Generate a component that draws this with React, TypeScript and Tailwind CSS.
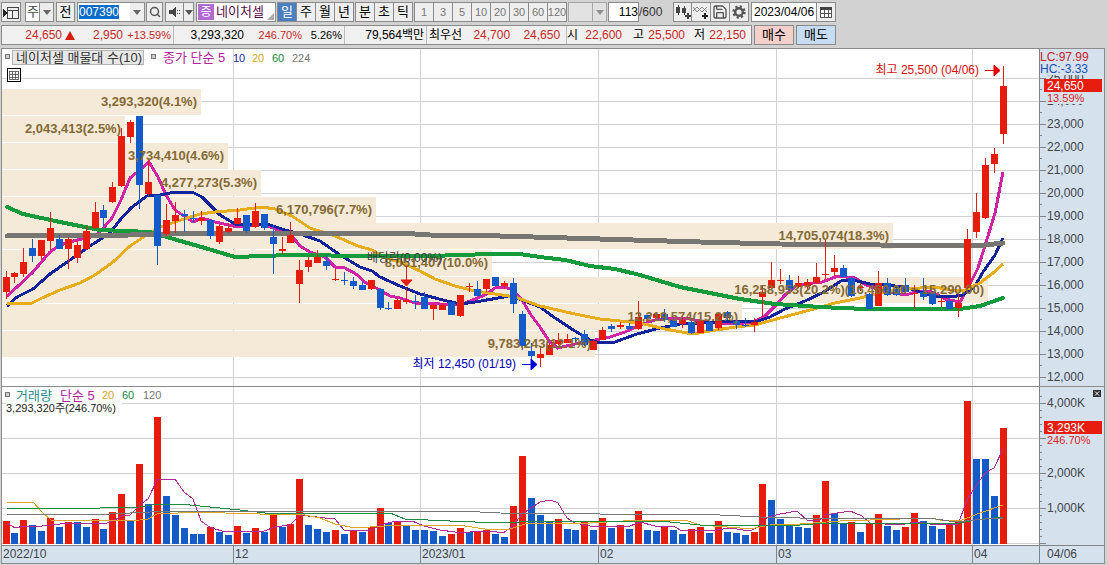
import { useEffect, useRef, useState } from 'react';
import type { ReactNode } from 'react';
import { Save, Search } from 'lucide-react';
import { clsx } from 'clsx';

type Point = [number, number];
// direction, high, body top, body bottom, low
type Candle = ['R' | 'B', number, number, number, number];
type Volume = ['R' | 'B', number];

const UP = '#e61c0c';
const DOWN = '#145ac8';

const CANDLES: Candle[] = [
  ['R', 271, 277, 292, 299], ['R', 272, 273, 277, 283], ['R', 248, 262, 274, 277], ['B', 239, 248, 256, 262],
  ['R', 240, 240, 256, 260], ['R', 212, 228, 241, 250], ['B', 235, 239, 249, 249], ['R', 237, 239, 249, 269],
  ['R', 240, 245, 258, 263], ['R', 226, 231, 249, 250], ['R', 202, 212, 228, 229], ['B', 205, 210, 218, 227],
  ['R', 182, 187, 202, 203], ['R', 128, 136, 186, 187], ['R', 120, 122, 137, 143], ['B', 116, 116, 185, 209],
  ['R', 160, 182, 194, 196], ['B', 195, 195, 246, 265], ['R', 204, 220, 234, 236], ['R', 202, 215, 221, 233],
  ['B', 210, 214, 216, 232], ['B', 211, 218, 219, 223], ['R', 211, 218, 221, 225], ['B', 219, 220, 236, 239],
  ['R', 225, 226, 242, 244], ['R', 223, 228, 232, 233], ['R', 208, 218, 224, 224], ['B', 215, 215, 231, 233],
  ['R', 203, 211, 227, 228], ['B', 214, 214, 228, 230], ['B', 225, 237, 244, 274], ['R', 237, 249, 251, 254],
  ['R', 222, 235, 243, 243], ['R', 260, 270, 284, 303], ['R', 257, 260, 267, 272], ['R', 250, 257, 263, 263],
  ['B', 255, 261, 266, 270], ['R', 269, 279, 280, 281], ['B', 272, 280, 281, 285], ['B', 277, 281, 286, 289],
  ['B', 281, 285, 290, 290], ['R', 280, 280, 289, 290], ['B', 288, 289, 308, 310], ['B', 302, 308, 309, 310],
  ['R', 298, 300, 309, 309], ['R', 288, 300, 302, 304], ['B', 295, 301, 302, 309], ['B', 292, 297, 309, 309],
  ['R', 304, 305, 309, 320], ['R', 303, 305, 310, 310], ['B', 302, 302, 315, 315], ['R', 295, 295, 316, 317],
  ['R', 283, 286, 287, 292], ['B', 281, 289, 296, 296], ['R', 279, 279, 289, 292], ['B', 277, 277, 286, 286],
  ['R', 281, 283, 286, 289], ['B', 278, 283, 304, 313], ['B', 311, 314, 346, 350], ['B', 343, 351, 356, 361],
  ['R', 346, 354, 358, 367], ['R', 343, 345, 355, 355], ['R', 333, 340, 344, 345], ['R', 334, 339, 343, 343],
  ['B', 337, 338, 339, 342], ['B', 330, 334, 345, 346], ['R', 340, 341, 350, 350], ['R', 327, 330, 340, 340],
  ['B', 324, 326, 329, 332], ['R', 322, 325, 327, 329], ['B', 323, 326, 329, 330], ['R', 301, 317, 329, 330],
  ['B', 315, 315, 319, 320], ['R', 312, 314, 318, 319], ['B', 309, 314, 320, 322], ['B', 319, 320, 327, 327],
  ['R', 318, 320, 324, 328], ['B', 321, 322, 333, 334], ['R', 319, 320, 333, 333], ['B', 321, 322, 331, 331],
  ['R', 312, 314, 328, 330], ['B', 311, 312, 318, 320], ['B', 320, 321, 325, 329], ['B', 318, 325, 326, 327],
  ['R', 318, 322, 325, 332], ['R', 286, 292, 297, 317], ['R', 262, 280, 288, 288], ['R', 269, 280, 281, 284],
  ['B', 275, 280, 290, 291], ['R', 276, 283, 287, 288], ['R', 279, 282, 286, 289], ['R', 263, 277, 283, 284],
  ['R', 240, 274, 275, 280], ['R', 255, 268, 272, 276], ['B', 265, 268, 277, 277], ['B', 277, 278, 296, 297],
  ['R', 283, 287, 288, 291], ['B', 293, 294, 309, 309], ['R', 271, 283, 306, 306], ['B', 278, 283, 295, 296],
  ['B', 285, 289, 295, 296], ['B', 278, 285, 292, 293], ['R', 285, 293, 294, 309], ['B', 278, 292, 297, 300],
  ['B', 291, 293, 304, 305], ['R', 298, 301, 302, 307], ['B', 299, 301, 309, 309], ['R', 294, 303, 308, 317],
  ['R', 229, 239, 288, 289], ['R', 193, 212, 232, 238], ['R', 158, 165, 218, 219], ['R', 148, 154, 164, 173],
  ['R', 66, 86, 134, 144],
];

const VOLUMES: Volume[] = [
  ['R', 521], ['B', 533], ['R', 520], ['B', 525], ['B', 531], ['R', 518], ['B', 527], ['R', 522], ['B', 522], ['B', 527],
  ['R', 519], ['B', 529], ['R', 512], ['R', 494], ['B', 521], ['R', 464], ['B', 504], ['R', 417], ['B', 496], ['B', 515],
  ['B', 528], ['B', 534], ['B', 534], ['R', 527], ['B', 532], ['B', 535], ['R', 526], ['B', 533], ['R', 528], ['B', 532],
  ['R', 515], ['B', 527], ['R', 524], ['R', 479], ['B', 525], ['B', 529], ['B', 532], ['R', 530], ['B', 534], ['R', 530],
  ['B', 532], ['R', 527], ['R', 508], ['B', 523], ['R', 522], ['B', 525], ['B', 530], ['B', 530], ['B', 531], ['B', 536],
  ['R', 534], ['R', 528], ['B', 532], ['R', 532], ['R', 530], ['B', 534], ['B', 537], ['R', 506], ['R', 456], ['B', 498],
  ['B', 515], ['B', 522], ['R', 519], ['B', 529], ['B', 530], ['R', 522], ['B', 530], ['R', 518], ['B', 528], ['R', 525],
  ['B', 529], ['R', 511], ['B', 530], ['B', 531], ['R', 527], ['B', 530], ['B', 534], ['R', 529], ['R', 527], ['B', 533],
  ['R', 521], ['B', 532], ['B', 533], ['B', 535], ['R', 532], ['R', 484], ['B', 500], ['B', 519], ['B', 525], ['B', 527],
  ['B', 528], ['R', 515], ['R', 481], ['B', 513], ['B', 523], ['R', 522], ['B', 532], ['R', 524], ['R', 514], ['B', 526],
  ['B', 530], ['R', 527], ['R', 513], ['B', 521], ['B', 526], ['B', 529], ['R', 525], ['R', 522], ['R', 401], ['B', 459],
  ['B', 459], ['B', 496], ['R', 428],
];

const PRICE_LINES: { color: string; width: number; points: Point[] }[] = [
  {
    color: '#d023a8',
    width: 3,
    points: [
      [7, 296], [17, 287], [32, 273], [50, 252], [60, 245], [77, 240], [96, 236], [105, 226], [112, 218], [121, 200],
      [130, 178], [140, 170], [149, 162], [158, 177], [166, 195], [175, 210], [184, 216], [193, 222], [202, 218],
      [215, 222], [233, 226], [247, 226], [260, 224], [273, 228], [292, 236], [300, 246], [310, 252], [325, 257],
      [335, 267], [345, 268], [356, 274], [366, 283], [378, 289], [390, 296], [400, 298], [415, 303], [432, 303],
      [447, 305], [463, 304], [475, 299], [485, 295], [495, 288], [505, 287], [513, 290], [522, 300], [531, 315],
      [540, 327], [549, 341], [558, 348], [575, 344], [595, 340], [610, 337], [625, 332], [640, 325], [655, 320],
      [670, 318], [685, 318], [700, 321], [715, 323], [735, 324], [753, 322], [765, 316], [775, 306], [785, 295],
      [797, 285], [805, 284], [822, 282], [838, 276], [855, 278], [866, 285], [880, 290], [905, 295], [920, 291],
      [930, 291], [945, 299], [960, 302], [968, 288], [978, 268], [988, 236], [995, 213], [1003, 172],
    ],
  },
  {
    color: '#14259b',
    width: 3,
    points: [
      [7, 306], [17, 297], [33, 289], [50, 274], [70, 260], [90, 246], [110, 233], [120, 220], [131, 208], [147, 196],
      [160, 195], [175, 192], [192, 192], [202, 197], [220, 215], [235, 224], [250, 224], [270, 225], [285, 230],
      [300, 234], [320, 241], [340, 255], [360, 267], [372, 271], [380, 277], [400, 286], [420, 294], [447, 301],
      [460, 304], [475, 302], [510, 296], [522, 300], [540, 307], [555, 318], [575, 331], [590, 340], [600, 343],
      [615, 342], [637, 334], [660, 328], [680, 324], [700, 323], [740, 321], [755, 322], [770, 317], [785, 309],
      [805, 301], [822, 293], [833, 286], [841, 281], [853, 280], [870, 284], [885, 285], [905, 287], [920, 292],
      [935, 296], [950, 297], [963, 295], [975, 286], [983, 272], [995, 255], [1003, 238],
    ],
  },
  {
    color: '#e6ac19',
    width: 3,
    points: [
      [7, 303], [32, 303], [42, 298], [60, 290], [80, 283], [95, 275], [113, 262], [130, 246], [145, 236], [160, 227],
      [175, 222], [200, 214], [215, 212], [240, 210], [262, 207], [275, 209], [292, 216], [310, 228], [335, 236],
      [358, 246], [372, 250], [385, 258], [400, 262], [420, 271], [435, 279], [455, 286], [475, 291], [495, 294],
      [515, 297], [540, 306], [575, 314], [600, 319], [640, 323], [665, 329], [693, 334], [710, 331], [735, 327],
      [755, 325], [780, 318], [810, 310], [835, 303], [860, 298], [880, 293], [900, 289], [920, 288], [935, 287],
      [950, 290], [965, 290], [980, 283], [992, 274], [1003, 264],
    ],
  },
  {
    color: '#159a3c',
    width: 4,
    points: [
      [7, 207], [23, 214], [60, 222], [100, 230], [125, 231], [150, 232], [160, 235], [177, 240], [205, 248],
      [235, 257], [290, 255], [370, 256], [430, 256], [490, 254], [520, 254], [540, 257], [565, 260], [590, 266],
      [615, 269], [640, 275], [660, 281], [680, 287], [705, 292], [740, 299], [775, 304], [820, 307], [865, 309],
      [960, 309], [980, 306], [1003, 298],
    ],
  },
  {
    color: '#787673',
    width: 5,
    points: [
      [7, 236], [130, 235], [210, 233], [330, 233], [400, 233], [430, 235], [500, 236], [600, 239], [700, 242],
      [780, 244], [880, 245], [955, 246], [985, 245], [1003, 243],
    ],
  },
];

const VOLUME_LINES: { color: string; points: Point[] }[] = [
  {
    color: '#b02a9c',
    points: [
      [7, 523], [15, 528], [24, 526], [42, 526], [60, 524], [80, 523], [95, 523], [104, 524], [113, 521], [122, 516],
      [130, 515], [140, 505], [148, 499], [157, 480], [175, 479], [184, 492], [193, 499], [201, 521], [211, 528],
      [226, 532], [264, 531], [275, 527], [290, 525], [300, 515], [325, 518], [335, 519], [344, 530], [370, 531],
      [380, 525], [392, 522], [412, 521], [424, 526], [440, 530], [455, 532], [470, 532], [490, 531], [503, 533],
      [513, 526], [522, 514], [531, 508], [540, 502], [551, 500], [558, 503], [567, 518], [575, 523], [590, 526],
      [630, 526], [640, 522], [655, 526], [675, 527], [682, 531], [700, 530], [710, 531], [730, 528], [750, 531],
      [758, 527], [768, 517], [780, 514], [797, 511], [808, 521], [820, 520], [825, 515], [850, 511], [862, 516],
      [870, 523], [885, 524], [900, 525], [915, 522], [930, 524], [958, 524], [968, 498], [985, 473], [994, 468],
      [1003, 449],
    ],
  },
  {
    color: '#dfa62a',
    points: [
      [7, 502], [33, 502], [42, 512], [51, 520], [60, 521], [140, 520], [148, 519], [157, 514], [200, 512], [225, 513],
      [260, 514], [300, 514], [320, 518], [335, 524], [350, 527], [370, 527], [400, 525], [440, 525], [465, 526],
      [485, 529], [510, 529], [525, 524], [545, 523], [590, 523], [640, 520], [685, 520], [700, 525], [740, 528],
      [755, 528], [770, 525], [800, 524], [840, 521], [900, 519], [930, 518], [945, 521], [962, 520], [980, 513],
      [1003, 505],
    ],
  },
  {
    color: '#1d8a40',
    points: [
      [7, 508], [100, 508], [140, 507], [158, 504], [180, 504], [200, 506], [240, 510], [265, 513], [390, 513],
      [405, 519], [450, 521], [500, 523], [540, 521], [660, 521], [700, 525], [800, 525], [830, 523], [960, 523],
      [975, 520], [1003, 517],
    ],
  },
  {
    color: '#777777',
    points: [
      [7, 514], [110, 514], [170, 511], [460, 511], [500, 513], [600, 514], [720, 515], [760, 517], [800, 518],
      [930, 518], [955, 522], [985, 519], [1003, 518],
    ],
  },
];

const PROFILE = [
  { y: 89, right: 201, label: '3,293,320(4.1%)' },
  { y: 116, right: 125, label: '2,043,413(2.5%)' },
  { y: 143, right: 228, label: '3,734,410(4.6%)' },
  { y: 170, right: 261, label: '4,277,273(5.3%)' },
  { y: 197, right: 376, label: '6,170,796(7.7%)' },
  { y: 223, right: 893, label: '14,705,074(18.3%)' },
  { y: 250, right: 492, label: '8,051,407(10.0%)' },
  { y: 277, right: 988, label: '16,258,953(20.2%)(16,460.00 ~ 15,290.00)' },
  { y: 304, right: 742, label: '12,219,574(15.2%)' },
  { y: 331, right: 595, label: '9,783,243(12.1%)' },
];

const MONTHS = [
  { x: 233, label: '12' },
  { x: 420, label: '2023/01' },
  { x: 598, label: '02' },
  { x: 776, label: '03' },
  { x: 972, label: '04' },
];

const PRICES = [25, 24, 23, 22, 21, 20, 19, 18, 17, 16, 15, 14, 13, 12];
const PERIODS = ['일', '주', '월', '년'];
const UNITS = ['분', '초', '틱'];
const MINUTES = ['1', '3', '5', '10', '20', '30', '60', '120'];

const priceY = (thousands: number) => 124 + (23 - thousands) * 23;
const volumeY = (thousands: number) => 543 - thousands * 35;
const barX = (i: number) => Math.floor(3 + i * 8.905);
const toPoints = (points: Point[]) => points.map((p) => p.join(',')).join(' ');

function Caret({ className }: { className?: string }) {
  return (
    <svg viewBox="0 0 8 5" className={clsx('w-2 h-[5px]', className)} aria-hidden="true">
      <path d="M0 0h8L4 5z" fill="currentColor" />
    </svg>
  );
}

function Combo({ label, className, children }: { label: string; className: string; children?: ReactNode }) {
  return (
    <div className={clsx('relative h-5 border border-[#8a8a8a]', className)}>
      <select aria-label={label} className="block w-full h-full appearance-none pl-px text-[13px] leading-[18px] text-[#444] outline-none">
        {children}
      </select>
      <span className="absolute right-0 inset-y-0 w-[14px] border-l border-[#8a8a8a] bg-[#ececec] flex items-center justify-center pointer-events-none">
        <Caret className="text-[#666]" />
      </span>
    </div>
  );
}

function ToolButton({ label, className, children }: { label: string; className?: string; children: ReactNode }) {
  return (
    <button
      aria-label={label}
      className={clsx('h-5 border border-[#8a8a8a] bg-[#eeeeee] flex items-center justify-center shrink-0', className)}
    >
      {children}
    </button>
  );
}

function ButtonGroup({ items, active, onPick, className }: {
  items: string[];
  active?: string;
  onPick?: (item: string) => void;
  className: string;
}) {
  return (
    <div className="flex border-l border-[#8a8a8a] shrink-0">
      {items.map((item) => (
        <button
          key={item}
          onClick={() => onPick?.(item)}
          className={clsx(
            'w-[19px] h-5 border-y border-r border-[#8a8a8a] flex items-center justify-center overflow-hidden',
            className,
            item === active ? 'bg-[#4b7fc0] text-white' : 'bg-[#eeeeee]'
          )}
        >
          {item}
        </button>
      ))}
    </div>
  );
}

function Toolbar() {
  const [period, setPeriod] = useState('일');
  const codeRef = useRef<HTMLInputElement>(null);

  // The code box starts selected so a new ticker can be typed straight away
  useEffect(() => {
    codeRef.current?.focus();
    codeRef.current?.select();
  }, []);

  return (
    <div className="flex items-center h-5 pl-px text-black">
      <ToolButton label="패널 열기" className="w-5">
        <svg viewBox="0 0 16 14" className="w-4 h-[14px]" shapeRendering="crispEdges">
          <path d="M4 2h11v11H4zM4 5h11M9 5v8M4 9h1" fill="none" stroke="#444" />
          <path d="M0 4v8l5-4z" fill="#222" />
        </svg>
      </ToolButton>
      <Combo label="종류" className="w-[29px] ml-1 bg-white shrink-0">
        <option>주</option>
      </Combo>
      <ToolButton label="전체" className="w-[19px] ml-[2px] text-[13px]">전</ToolButton>

      <div className="flex items-center w-[68px] h-5 ml-[2px] border border-[#8a8a8a] bg-white shrink-0">
        <input
          ref={codeRef}
          aria-label="종목코드"
          defaultValue="007390"
          className="flex-1 min-w-0 h-full pl-px text-[12px] outline-none selection:bg-[#0a6cc8] selection:text-white"
        />
        <button aria-label="최근 종목" className="w-[14px] h-full bg-[#eeeeee] flex items-center justify-center">
          <Caret className="text-[#666]" />
        </button>
      </div>
      <ToolButton label="검색" className="w-[17px] ml-px">
        <Search className="w-3 h-3 text-[#555]" strokeWidth={3} />
      </ToolButton>
      <ToolButton label="소리" className="w-[19px] ml-[2px]">
        <svg viewBox="0 0 14 12" className="w-[14px] h-3" shapeRendering="crispEdges" fill="#444">
          <path d="M1 4h3l4-4v12l-4-4H1z" />
          <path d="M9 4h1v1H9zM9 7h1v1H9zM11 4h1v1h-1zM11 7h1v1h-1z" />
        </svg>
      </ToolButton>
      <ToolButton label="소리 메뉴" className="w-[10px] border-l-0">
        <Caret className="text-[#555]" />
      </ToolButton>

      <div className="relative flex items-center w-20 h-5 ml-[2px] border border-[#8a8a8a] bg-white shrink-0">
        <span className="w-4 h-4 ml-px bg-[#b06ad0] text-white text-[12px] leading-4 text-center">증</span>
        <span className="ml-[2px] text-[13px] text-[#5a0a4a]">네이처셀</span>
        <svg viewBox="0 0 7 7" className="absolute right-px bottom-px w-[7px] h-[7px]">
          <path d="M7 0v7H0z" fill="#aaa" />
        </svg>
      </div>

      <div className="flex ml-px gap-px">
        <ButtonGroup items={PERIODS} active={period} onPick={setPeriod} className="text-[13px]" />
        <ButtonGroup items={UNITS} className="text-[13px]" />
        <ButtonGroup items={MINUTES} className="text-[11px] text-[#777]" />
      </div>

      <Combo label="분 단위" className="w-[39px] ml-px bg-[#eeeeee] shrink-0 opacity-60" />
      <input
        aria-label="조회 개수"
        defaultValue="113"
        className="w-[31px] h-5 ml-px border border-[#8a8a8a] bg-white text-[12px] text-right outline-none"
      />
      <span className="w-[34px] text-[12px] text-[#333]">/600</span>

      <ToolButton label="지표 추가" className="w-[19px]">
        <svg viewBox="0 0 16 14" className="w-4 h-[14px]" shapeRendering="crispEdges" fill="#444">
          <path d="M1 2h4v6H1zM3 0h1v10H3zM7 3h4v5H7zM9 1h1v9H9zM10 10h6v2h-6zM12 8h2v6h-2z" />
        </svg>
      </ToolButton>
      <ToolButton label="비교선 추가" className="w-[19px] border-l-0">
        <svg viewBox="0 0 16 14" className="w-4 h-[14px]">
          <path d="M0 6l4-4 5 5 5-5M0 2l4 5 5-5 5 5" fill="none" stroke="#888" strokeWidth="1" />
          <path d="M9 10h6v2H9zM11 8h2v6h-2z" fill="#222" />
        </svg>
      </ToolButton>
      <ToolButton label="저장" className="w-[19px] border-l-0">
        <Save className="w-4 h-4 text-[#555]" strokeWidth={2} />
      </ToolButton>
      <ToolButton label="설정" className="w-[19px] border-l-0">
        <svg viewBox="0 0 14 14" className="w-[14px] h-[14px]" fill="none" stroke="#555">
          <circle cx="7" cy="7" r="3.8" strokeWidth="2.4" />
          <circle cx="7" cy="7" r="5.6" strokeWidth="2.2" strokeDasharray="2.2 2.2" />
        </svg>
      </ToolButton>

      <div className="flex items-center w-[85px] h-5 ml-[2px] border border-[#8a8a8a] bg-white shrink-0">
        <input
          aria-label="기준일"
          defaultValue="2023/04/06"
          className="flex-1 min-w-0 h-full pl-[2px] text-[12px] outline-none"
        />
        <button aria-label="달력" className="w-[19px] h-full border-l border-[#8a8a8a] bg-[#eeeeee] flex items-center justify-center">
          <svg viewBox="0 0 12 11" className="w-3 h-[11px]" shapeRendering="crispEdges">
            <path d="M.5.5h11v10H.5zM.5 6.5h11M4.5 3v7M8.5 3v7" fill="#fff" stroke="#555" />
            <path d="M0 0h12v3H0z" fill="#444" />
          </svg>
        </button>
      </div>
    </div>
  );
}

function QuoteBar() {
  return (
    <div className="flex items-center h-5 pl-px mt-[3px] text-[12px]">
      <div className="flex items-center h-5 border border-[#8a8a8a] bg-[#f0f0f0] text-[#c8281e] shrink-0">
        <div className="flex items-center h-full w-[172px] border-r border-[#bbb]">
          <span className="w-[60px] text-right">24,650</span>
          <svg viewBox="0 0 10 9" className="w-[10px] h-[9px] ml-[3px]">
            <path d="M5 0l5 9H0z" fill="#d81c10" />
          </svg>
          <span className="w-12 text-right">2,950</span>
          <span className="w-12 text-right text-[11px]">+13.59%</span>
        </div>
        <div className="flex items-center h-full w-[171px] border-r border-[#bbb]">
          <span className="w-[70px] text-right text-black">3,293,320</span>
          <span className="w-[58px] text-right text-[11px]">246.70%</span>
          <span className="w-10 text-right text-[11px] text-black">5.26%</span>
        </div>
        <div className="flex items-center justify-end h-full w-[82px] pr-[2px] border-r border-[#bbb] text-black">
          79,564백만
        </div>
        <div className="flex items-center h-full w-[140px] pl-[2px] border-r border-[#bbb]">
          <span className="text-black">최우선</span>
          <span className="w-12 text-right">24,700</span>
          <span className="w-[50px] text-right">24,650</span>
        </div>
        <div className="flex items-center h-full w-[184px]">
          <span className="w-4 text-black">시</span>
          <span className="w-[39px] text-right">22,600</span>
          <span className="w-[22px] text-right text-black">고</span>
          <span className="w-[41px] text-right">25,500</span>
          <span className="w-5 text-right text-black">저</span>
          <span className="w-[41px] text-right">22,150</span>
        </div>
      </div>
      <button className="w-10 h-5 ml-[2px] border border-[#8a8a8a] bg-[#f5cfca] text-[13px] leading-[18px]">매수</button>
      <button className="w-10 h-5 ml-[2px] border border-[#8a8a8a] bg-[#c6dcf2] text-[13px] leading-[18px]">매도</button>
    </div>
  );
}

function PriceChart() {
  return (
    <svg viewBox="2 49 1102 337" className="block w-full h-auto bg-white">
      {/* Grid */}
      <g fill="#d2d2d2" shapeRendering="crispEdges">
        {PRICES.map((p) => <rect key={p} x="2" y={priceY(p)} width="1037" height="1" />)}
        {MONTHS.map((m) => <rect key={m.x} x={m.x} y="49" width="1" height="337" />)}
      </g>

      {/* Volume profile */}
      <g fill="#f5e9d8" shapeRendering="crispEdges">
        {PROFILE.map((p) => <rect key={p.y} x="2" y={p.y} width={p.right - 2} height="26" />)}
      </g>

      {PRICE_LINES.slice(0, 3).map((line) => (
        <polyline key={line.color} points={toPoints(line.points)} fill="none" stroke={line.color} strokeWidth={line.width} shapeRendering="crispEdges" />
      ))}
      {PRICE_LINES.slice(3).map((line) => (
        <polyline key={line.color} points={toPoints(line.points)} fill="none" stroke={line.color} strokeWidth={line.width} strokeLinecap="round" shapeRendering="crispEdges" />
      ))}

      <g shapeRendering="crispEdges">
        {CANDLES.map(([dir, high, top, bottom, low], i) => (
          <g key={i} fill={dir === 'R' ? UP : DOWN}>
            <rect x={barX(i) + 3} y={high} width="1" height={Math.max(low - high, 1)} />
            <rect x={barX(i)} y={top} width="7" height={bottom - top} />
          </g>
        ))}
      </g>

      <g fill="#846a34" fontSize="13" fontWeight="700" textAnchor="end">
        {PROFILE.map((p) => <text key={p.y} x={p.right - 4} y={p.y + 17}>{p.label}</text>)}
      </g>

      {/* Markers */}
      <text x="367" y="262" fontSize="12" fill="#3c3c3c">배당락(0.00%)</text>
      <path d="M406.5 266v15M401 280h11l-5.500 6z" fill={UP} stroke={UP} />
      <text x="979" y="74" fontSize="12" fill="#d80c0c" textAnchor="end">최고 25,500 (04/06)</text>
      <path d="M985 70.500h10M994 65l6 5.500-6 5.500z" fill="#e60000" stroke="#e60000" />
      <text x="516" y="368" fontSize="12" fill="#0000b8" textAnchor="end">최저 12,450 (01/19)</text>
      <path d="M522 364.500h10M531 359l6 5.500-6 5.500z" fill="#0000dc" stroke="#0000dc" />

      {/* Legend */}
      <g shapeRendering="crispEdges">
        <rect x="5.500" y="54.500" width="4" height="4" fill="#ccc" stroke="#777" />
        <rect x="12.500" y="50.500" width="131" height="14" fill="#e8e8e8" stroke="#b4b4b4" />
        <rect x="151.500" y="54.500" width="4" height="4" fill="#ccc" stroke="#777" />
        <rect x="7.500" y="68.500" width="13" height="13" fill="#fff" stroke="#000" />
        <path d="M9.500 71.500h9v8h-9zM9.500 74.500h9M9.500 77.500h9M12.500 71v8M15.500 71v8" fill="none" stroke="#666" />
      </g>
      <text x="16" y="62" fontSize="13" fill="#333">네이처셀 매물대 수(10)</text>
      <text x="163" y="62" fontSize="13" fill="#b420a0">종가 단순 5</text>
      <g fontSize="11">
        <text x="233" y="62" fill="#14259b">10</text>
        <text x="252" y="62" fill="#d8a818">20</text>
        <text x="272" y="62" fill="#12893a">60</text>
        <text x="292" y="62" fill="#777">224</text>
      </g>

      {/* Price axis */}
      <rect x="1039" y="49" width="65" height="337" fill="#d6e1ee" />
      <g fill="#808488" shapeRendering="crispEdges">
        <rect x="1039" y="49" width="1" height="337" />
        {PRICES.map((p) => <rect key={p} x="1040" y={priceY(p)} width="6" height="1" />)}
        {PRICES.map((p) => <rect key={p} x="1040" y={priceY(p) + 11} width="2" height="1" />)}
      </g>
      <g fontSize="12" fill="#40444a">
        {PRICES.map((p) => <text key={p} x="1047" y={priceY(p) + 4}>{`${p},000`}</text>)}
      </g>
      <rect x="1040" y="50" width="64" height="25" fill="#d6e1ee" />
      <rect x="1047" y="91" width="56" height="13" fill="#d6e1ee" />
      <rect x="1044" y="79" width="58" height="13" fill={UP} />
      <g fontSize="12">
        <text x="1040" y="61" fill="#c81e1e">LC:97.99</text>
        <text x="1040" y="73" fill="#1450b4">HC:-3.33</text>
        <text x="1047" y="90" fill="#fff">24,650</text>
        <text x="1047" y="102" fontSize="11" fill="#d81e1e">13.59%</text>
      </g>
    </svg>
  );
}

function VolumeChart() {
  return (
    <svg viewBox="2 387 1102 176" className="block w-full h-auto bg-white">
      <g fill="#d2d2d2" shapeRendering="crispEdges">
        {[0, 1, 2, 3, 4].map((v) => <rect key={v} x="2" y={volumeY(v)} width="1037" height="1" />)}
        {MONTHS.map((m) => <rect key={m.x} x={m.x} y="387" width="1" height="158" />)}
      </g>

      <g shapeRendering="crispEdges">
        {VOLUMES.map(([dir, top], i) => (
          <rect key={i} x={barX(i)} y={top} width="7" height={544 - top} fill={dir === 'R' ? UP : DOWN} />
        ))}
      </g>
      {VOLUME_LINES.map((line) => (
        <polyline key={line.color} points={toPoints(line.points)} fill="none" stroke={line.color} shapeRendering="crispEdges" />
      ))}

      {/* Legend */}
      <rect x="5.500" y="392.500" width="4" height="4" fill="#ccc" stroke="#777" shapeRendering="crispEdges" />
      <rect x="6" y="402" width="116" height="12" fill="#fff" />
      <text x="16" y="400" fontSize="13" fill="#2a8c90">거래량</text>
      <text x="60" y="400" fontSize="13" fill="#b420a0">단순 5</text>
      <g fontSize="11">
        <text x="102" y="399" fill="#d8a818">20</text>
        <text x="122" y="399" fill="#12893a">60</text>
        <text x="143" y="399" fill="#777">120</text>
      </g>
      <text x="6" y="412" fontSize="11" fill="#222">3,293,320주(246.70%)</text>

      {/* Volume axis */}
      <rect x="1039" y="387" width="65" height="176" fill="#d6e1ee" />
      <rect x="2" y="545" width="1037" height="18" fill="#d6e1ee" />
      <g fill="#808488" shapeRendering="crispEdges">
        <rect x="1039" y="387" width="1" height="176" />
        <rect x="2" y="545" width="1102" height="1" />
        {[0, 1, 2, 3, 4].map((v) => <rect key={v} x="1040" y={volumeY(v)} width="6" height="1" />)}
        {Array.from({ length: 22 }, (_, i) => <rect key={i} x="1040" y={543 - i * 7} width="2" height="1" />)}
        {MONTHS.map((m) => <rect key={m.x} x={m.x} y="546" width="1" height="17" />)}
      </g>
      <g fontSize="12" fill="#40444a">
        <text x="1047" y="407">4,000K</text>
        <text x="1047" y="477">2,000K</text>
        <text x="1047" y="512">1,000K</text>
        <text x="3" y="558">2022/10</text>
        {MONTHS.map((m) => <text key={m.x} x={m.x + 2} y="558">{m.label}</text>)}
        <text x="1047" y="558">04/06</text>
      </g>
      <rect x="1044" y="421" width="58" height="13" fill={UP} />
      <text x="1047" y="432" fontSize="12" fill="#fff">3,293K</text>
      <text x="1047" y="444" fontSize="11" fill="#d81e1e">246.70%</text>
    </svg>
  );
}

export default function App() {
  return (
    <main className="min-h-screen bg-[#d2d2d2] pt-[2px] font-['Liberation_Sans','Noto_Sans_CJK_KR',sans-serif] overflow-x-hidden">
      <Toolbar />
      <QuoteBar />

      <section className="mt-[3px] ml-px mr-[3px] border border-[#8c8c8c]">
        <PriceChart />
        <div className="relative border-t border-[#8c8c8c]">
          <VolumeChart />
          <button aria-label="거래량 닫기" className="absolute top-[3px] right-[3px] w-2 h-[7px] bg-[#333]">
            <svg viewBox="0 0 8 7" className="block w-2 h-[7px]">
              <path d="M2 1.500l4 4M6 1.500l-4 4" stroke="#fff" />
            </svg>
          </button>
        </div>
      </section>
    </main>
  );
}
